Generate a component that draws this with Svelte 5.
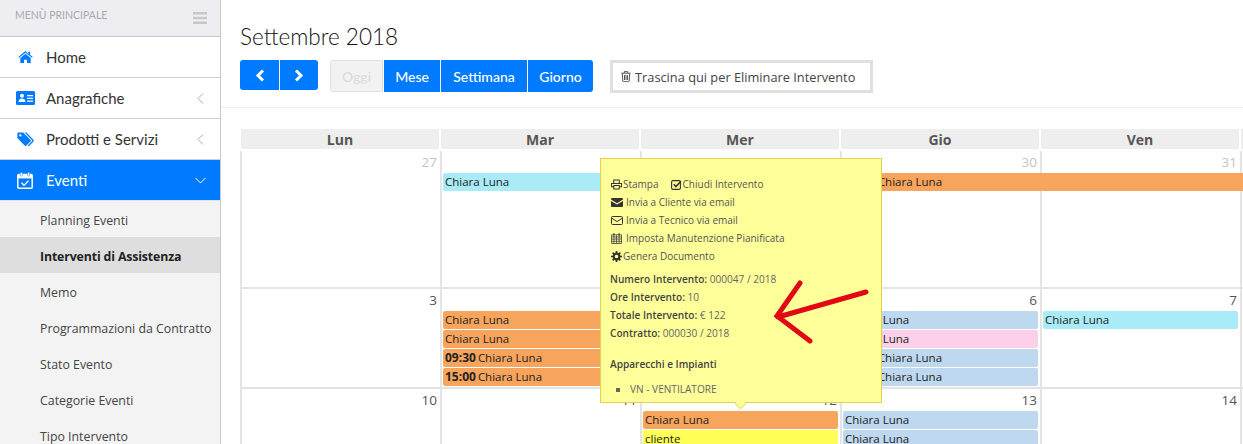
<script>
  const subs = ['Planning Eventi','Interventi di Assistenza','Memo','Programmazioni da Contratto','Stato Evento','Categorie Eventi','Tipo Intervento'];
  const days = ['Lun','Mar','Mer','Gio','Ven',''];
  const O='orange',C='cyan',B='blue',P='pink',Y='yellow';
  const weeks = [
    { cls:'w1', cells:[
      {d:27,off:true,ev:[]},
      {d:28,off:true,ev:[{c:C,t:'Chiara Luna',cut:true}]},
      {d:29,off:true,ev:[]},
      {d:30,off:true,ev:[{c:O,h:'09:30',t:'Chiara Luna',wide:true}]},
      {d:31,off:true,ev:[]},
      {d:'',ev:[]}]},
    { cls:'w2', cells:[
      {d:3,ev:[]},
      {d:'',ev:[{c:O,t:'Chiara Luna'},{c:O,t:'Chiara Luna'},{c:O,h:'09:30',t:'Chiara Luna'},{c:O,h:'15:00',t:'Chiara Luna'}]},
      {d:'',ev:[]},
      {d:6,ev:[{c:B,t:'Chiara Luna'},{c:P,t:'Chiara Luna'},{c:B,h:'09:30',t:'Chiara Luna'},{c:B,h:'15:00',t:'Chiara Luna'}]},
      {d:7,ev:[{c:C,t:'Chiara Luna'}]},
      {d:'',ev:[]}]},
    { cls:'w3', cells:[
      {d:10,ev:[]},{d:11,ev:[]},
      {d:12,ev:[{c:O,t:'Chiara Luna'},{c:Y,t:'cliente'}]},
      {d:13,ev:[{c:B,t:'Chiara Luna'},{c:B,t:'Chiara Luna'}]},
      {d:14,ev:[]},{d:'',ev:[]}]}
  ];
</script>

<div class="page">
  <aside class="side">
    <div class="side-head">
      <span>MENÙ PRINCIPALE</span>
      <svg width="14" height="12" viewBox="0 0 14 12"><path d="M0 0h14v2.600H0zM0 4.700h14v2.600H0zM0 9.400h14V12H0z" fill="#c8c8cc"/></svg>
    </div>
    <a class="item">
      <svg class="ic home" width="15" height="12" viewBox="0 0 16 13"><path d="M8 0 .2 6.400l.8 1L8 1.800l7 5.600.8-1-2.800-2.300V.8h-2v2.400z" fill="#007bff"/><path d="M8 3 2.400 7.500v5.500h4V9.400h3.200V13h4V7.500z" fill="#007bff"/></svg>
      <span>Home</span>
    </a>
    <a class="item">
      <svg class="ic" width="19" height="14" viewBox="0 0 19 14"><path d="M1.500 0h16A1.500 1.500 0 0 1 19 1.500v11a1.500 1.500 0 0 1-1.500 1.500h-16A1.500 1.500 0 0 1 0 12.500v-11A1.500 1.500 0 0 1 1.500 0z" fill="#007bff"/><circle cx="6" cy="4.800" r="2" fill="#fff"/><path d="M2.600 11c0-2.400 1.400-3.500 3.400-3.500s3.400 1.100 3.400 3.500z" fill="#fff"/><path d="M11 4h6v1.300h-6zM11 6.800h6v1.300h-6zM11 9.500h6v1.300h-6z" fill="#fff"/></svg>
      <span>Anagrafiche</span>
      <svg class="chev" width="7" height="11" viewBox="0 0 7 11"><path d="M6 .5 1 5.500l5 5" fill="none" stroke="#aaa" stroke-width="1"/></svg>
    </a>
    <a class="item">
      <svg class="ic tag" width="17" height="15" viewBox="0 0 18 16"><path d="M.3 1.500V6.500l8 8.200a1 1 0 0 0 1.400 0l4.800-4.800a1 1 0 0 0 0-1.400L6.500 .5H1.300a1 1 0 0 0-1 1zM3.500 2.500a1.200 1.200 0 1 1 0 2.400 1.200 1.200 0 0 1 0-2.400z" fill="#007bff" fill-rule="evenodd"/><path d="M9 .5l7.800 8a1 1 0 0 1 0 1.400l-5 5" fill="none" stroke="#007bff" stroke-width="1.300"/></svg>
      <span>Prodotti e Servizi</span>
      <svg class="chev" width="7" height="11" viewBox="0 0 7 11"><path d="M6 .5 1 5.500l5 5" fill="none" stroke="#aaa" stroke-width="1"/></svg>
    </a>
    <a class="item active">
      <svg class="ic tag" width="16" height="17" viewBox="0 0 16 17"><rect x=".8" y="2.500" width="14.400" height="13.700" rx="1" fill="none" stroke="#fff" stroke-width="1.500"/><path d="M.8 3h14.400v3.400H.8z" fill="#fff"/><rect x="3.400" y=".3" width="2" height="3.800" rx=".8" fill="#fff" stroke="#007bff" stroke-width=".5"/><rect x="10.600" y=".3" width="2" height="3.800" rx=".8" fill="#fff" stroke="#007bff" stroke-width=".5"/><path d="M4.500 10.800l2.500 2.500 4.500-4.500" fill="none" stroke="#fff" stroke-width="1.300"/></svg>
      <span>Eventi</span>
      <svg class="chev down" width="11" height="7" viewBox="0 0 11 7"><path d="M.5 1l5 5 5-5" fill="none" stroke="#fff" stroke-width="1"/></svg>
    </a>
    <ul class="sub">
      {#each subs as s, i}
        <li class:on={i===1}>{s}</li>
      {/each}
    </ul>
  </aside>

  <main class="main">
    <header class="top">
      <h1>Settembre 2018</h1>
      <div class="toolbar">
        <div class="group nav">
          <button aria-label="Precedente"><svg width="10" height="13" viewBox="0 0 10 13"><path d="M8 1.500 3 6.500l5 5" fill="none" stroke="#fff" stroke-width="3"/></svg></button>
          <button aria-label="Successivo"><svg width="10" height="13" viewBox="0 0 10 13"><path d="M2 1.500l5 5-5 5" fill="none" stroke="#fff" stroke-width="3"/></svg></button>
        </div>
        <div class="group views">
          <button class="off">Oggi</button>
          <button>Mese</button>
          <button>Settimana</button>
          <button>Giorno</button>
        </div>
        <div class="drop">
          <svg width="10" height="11" viewBox="0 0 10 11"><path d="M.3 2.200h9.400M1.300 2.400l.5 7.600a.8.800 0 0 0 .8.700h4.800a.8.800 0 0 0 .8-.7l.5-7.600M3.300 2.200V.6h3.400v1.600M3.500 4v5M5 4v5M6.500 4v5" fill="none" stroke="#555" stroke-width="1"/></svg>
          <span>Trascina qui per Eliminare Intervento</span>
        </div>
      </div>
    </header>

    <section class="cal">
      <div class="head">
        {#each days as d}<div>{d}</div>{/each}
      </div>
      {#each weeks as w}
        <div class="week {w.cls}">
          {#each w.cells as c}
            <div class="cell">
              <div class="num" class:off={c.off}>{c.d}</div>
              {#each c.ev as e}
                <div class="ev {e.c}" class:cut={e.cut} class:wide={e.wide}>
                  {#if e.h}<b>{e.h}</b>{/if}{#if e.t}{e.t}{/if}
                </div>
              {/each}
            </div>
          {/each}
        </div>
      {/each}
    </section>
  </main>

  <div class="pop">
    <div class="acts">
      <div class="a">
        <svg width="11" height="11" viewBox="0 0 12 11"><path d="M3 4V.5h6V4M2.500 8H.5V4.500h11V8h-2M3 6.500h6v4H3z" fill="none" stroke="#333" stroke-width="1.100"/></svg><span class="t1">Stampa</span>
        <svg class="mid" width="11" height="11" viewBox="0 0 11 11"><rect x=".6" y="1.600" width="8.800" height="8.800" rx="1.300" fill="none" stroke="#333" stroke-width="1.100"/><path d="M2.700 5.300l2.200 2.200L10 2.300" fill="none" stroke="#333" stroke-width="1.600"/></svg><span class="t1">Chiudi Intervento</span>
      </div>
      <div class="a">
        <svg width="12" height="9" viewBox="0 0 12 9"><path d="M0 1a1 1 0 0 1 1-1h10a1 1 0 0 1 1 1v.6L6 5.200 0 1.600zM0 3l6 3.600L12 3v5a1 1 0 0 1-1 1H1a1 1 0 0 1-1-1z" fill="#333"/></svg><span class="t2">Invia a Cliente via email</span>
      </div>
      <div class="a">
        <svg width="12" height="9" viewBox="0 0 12 9"><rect x=".5" y=".5" width="11" height="8" rx="1" fill="none" stroke="#333"/><path d="M.5 2 6 5.600 11.500 2" fill="none" stroke="#333"/></svg><span class="t2">Invia a Tecnico via email</span>
      </div>
      <div class="a">
        <svg width="11" height="11" viewBox="0 0 11 11"><path d="M.5 1.800h10v8.700H.5zM.5 4h10M.5 6.100h10M.5 8.300h10M2.900 2v8.500M5.500 2v8.500M8.100 2v8.500" fill="none" stroke="#444" stroke-width=".8"/><path d="M2.300.2h1.200v2.200H2.300zM7.500.2h1.200v2.200H7.500z" fill="#333"/></svg><span class="t3">Imposta Manutenzione Pianificata</span>
      </div>
      <div class="a">
        <svg width="11" height="11" viewBox="0 0 11 11"><circle cx="5.500" cy="5.500" r="2.900" fill="none" stroke="#333" stroke-width="2.200"/><path d="M5.500 0v11M0 5.500h11M1.600 1.600l7.800 7.800M9.400 1.600 1.600 9.400" stroke="#333" stroke-width="1.700" stroke-dasharray="2 7 2"/></svg><span class="t1">Genera Documento</span>
      </div>
    </div>
    <div class="info">
      <p><b>Numero Intervento:</b> 000047 / 2018</p>
      <p><b>Ore Intervento:</b> 10</p>
      <p><b>Totale Intervento:</b> € 122</p>
      <p><b>Contratto:</b> 000030 / 2018</p>
    </div>
    <h4>Apparecchi e Impianti</h4>
    <ul><li>VN - VENTILATORE</li></ul>
    <i class="tip"></i>
  </div>

  <svg class="arrow" width="100" height="66" viewBox="0 0 100 66"><path d="M94 12 6 37 M28 3 5 36l33 25" fill="none" stroke="#e10a14" stroke-width="5" stroke-linecap="round" stroke-linejoin="miter"/></svg>
</div>

<style>
  :global(body){margin:0;background:#fff;overflow:hidden;}
  .page{position:relative;width:1243px;height:444px;overflow:hidden;display:flex;font-family:"Open Sans","Liberation Sans",sans-serif;color:#333;}
  .side{flex:0 0 220px;height:444px;background:#f3f3f3;border-right:1px solid #c8c8c8;overflow:hidden;font-family:Lato,"Open Sans",sans-serif;}
  .side-head{height:36px;background:#eeeef2;border-bottom:1px solid #c8c8ca;display:flex;align-items:center;justify-content:space-between;padding:0 13px 0 15px;color:#a9a9ae;font-size:10.500px;}
  .side-head span{position:relative;top:-3px;}
  .item{display:flex;align-items:center;height:40px;background:#fff;border-bottom:1px solid #cfcfd2;padding-left:16px;position:relative;color:#333;font-size:15px;}
  .item > span{position:absolute;left:46px;}
  .item .chev{position:absolute;left:197px;top:15px;}
  .item .chev.down{left:195px;top:17px;}
  .item.active{background:#007bff;color:#fff;border-bottom:1px solid #dfe3e8;}
  .ic{display:block;}
  .ic.home{margin-left:2px;}
  .ic.tag{margin-left:1px;}
  .sub{list-style:none;margin:0;padding:0;font-family:"Open Sans",sans-serif;font-size:12.350px;color:#444;}
  .sub li{height:36px;line-height:39px;padding-left:40px;white-space:nowrap;}
  .sub li.on{background:#dedede;font-weight:700;color:#222;letter-spacing:-.15px;}

  .main{flex:1;min-width:0;}
  .top{height:107px;border-bottom:1px solid #eee;padding:0 0 0 19px;}
  h1{margin:0;padding-top:24px;height:36px;font-family:Lato,"Open Sans",sans-serif;font-weight:300;font-size:22.500px;line-height:26px;color:#111;}
  .toolbar{display:flex;align-items:flex-start;}
  .group{display:flex;}
  .group button{border:0;background:#007bff;color:#fff;font-family:Lato,"Open Sans",sans-serif;font-size:14px;font-weight:500;padding:0;margin:0 0 0 1px;height:32px;}
  .group button:first-child{margin-left:0;border-radius:3px 0 0 3px;}
  .group button:last-child{border-radius:0 3px 3px 0;}
  .nav button{width:39px;height:30px;display:flex;align-items:center;justify-content:center;}
  .nav button:last-child{width:38px;}
  .views{margin-left:12px;}
  .views button:nth-child(1){width:53px;background:#f2f2f2;color:#dcdcdc;border:1px solid #e0e0e0;box-sizing:border-box;}
  .views button:nth-child(2){width:56px;}
  .views button:nth-child(3){width:86px;}
  .views button:nth-child(4){width:65px;}
  .drop{margin-left:17px;width:263px;height:33px;border:3px solid #e0e0e0;box-sizing:border-box;display:flex;align-items:center;padding-left:8px;gap:4px;font-size:12.800px;color:#444;white-space:nowrap;}

  .cal{width:1400px;margin:21px 0 0 19px;}
  .head{display:grid;grid-template-columns:repeat(6,200px);height:22px;}
  .head div{background:#eee;margin:0 1px 2px 1px;height:20px;text-align:center;font-size:14px;font-weight:700;line-height:22px;color:#555;}
  .week{display:grid;grid-template-columns:repeat(6,200px);border-bottom:2px solid #e4e4e4;box-sizing:border-box;}
  .w1{height:138px;}
  .w2{height:100px;}
  .w3{height:100px;}
  .cell{border-left:2px solid #e4e4e4;padding:2px 2px 0 1px;box-sizing:border-box;min-width:0;}
  .num{text-align:right;font-size:13.500px;line-height:19px;height:20px;padding-right:1px;color:#555;}
  .num.off{color:#c4c4c4;}
  .ev{height:18px;line-height:18px;margin-bottom:1px;border-radius:2px;padding-left:2px;font-size:11.500px;color:#222;white-space:nowrap;position:relative;z-index:1;}
  .ev b{font-weight:700;font-size:12px;margin-right:2px;}
  .ev.cut{margin-right:-3px;border-radius:2px 0 0 2px;}
  .ev.wide{width:500px;}
  .orange{background:#f7a45c;}
  .cyan{background:#a9ebf7;}
  .blue{background:#bdd8ef;}
  .pink{background:#fcd0e8;}
  .yellow{background:#ffff57;}

  .pop{position:absolute;left:600px;top:158px;width:282px;height:245px;box-sizing:border-box;background:#ffff99;border:1px solid #e3d24a;padding:16px 9px 0 9px;font-size:10.100px;color:#666;z-index:5;}
  .acts{padding-left:1px;}
  .acts .a{display:flex;align-items:center;height:18px;color:#555;white-space:nowrap;font-size:10px;}
  .t1{margin-left:1px;}
  .t2{margin-left:3px;}
  .t3{margin-left:4px;}
  .mid{margin-left:12px;}
  .info{margin-top:5px;}
  .info p{margin:0;height:18px;line-height:18px;white-space:nowrap;}
  .info b{font-weight:600;color:#444;}
  h4{margin:13px 0 0;font-size:10.100px;font-weight:600;color:#444;line-height:18px;}
  .pop ul{margin:7px 0 0;padding:0 0 0 20px;list-style:square;line-height:18px;}
  .tip{position:absolute;left:134px;bottom:-7px;width:10px;height:10px;background:#ffff99;border-right:1px solid #e3d24a;border-bottom:1px solid #e3d24a;transform:rotate(45deg) scale(.75);}
  .arrow{position:absolute;left:772px;top:280px;z-index:6;}
</style>
